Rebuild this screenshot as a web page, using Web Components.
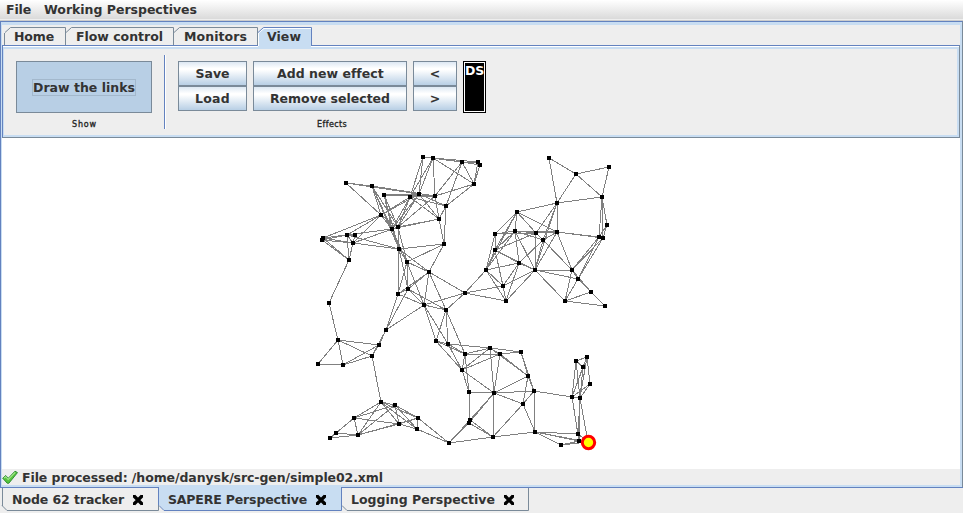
<!DOCTYPE html>
<html lang="en"><head><meta charset="utf-8"><title>Perspectives</title>
<style>
html,body{margin:0;height:513px;overflow:hidden;background:#eee}
body{font:bold 12.5px/16px "DejaVu Sans",sans-serif;color:#333}
</style></head><body>
<app-window></app-window>
<script>
const define = (name, html, setup) => customElements.define(name, class extends HTMLElement {
  constructor() {
    super();
    this.attachShadow({mode: 'open'}).innerHTML = html;
  }
  connectedCallback() { if (setup) setup(this, this.shadowRoot); }
});

/* Text run fitted to a given width by spreading letter spacing. */
define('fit-text', '<style>:host{display:block;white-space:pre;flex:none}span{display:inline-block}</style><span><slot></slot></span>', (el, root) => {
  const s = root.querySelector('span'), w = +el.getAttribute('w'), n = el.textContent.length;
  el.style.width = w + 'px';
  s.style.letterSpacing = (w - s.getBoundingClientRect().width) / n + 'px';
});

define('menu-bar', `<style>:host{display:flex;height:21px;padding:0 6px 1px;gap:13px;align-items:center;box-sizing:border-box;background:linear-gradient(#fff,#dadada 95%,#eee 96%);border-bottom:1px solid #ccc}</style><slot></slot>`);

define('top-tab', `<style>:host{display:grid;height:18px;flex:none}svg,div{grid-area:1/1}div{padding:2px 0 0 9px;line-height:16px}svg{display:block;overflow:visible}</style>
<svg height="18"></svg><div><slot></slot></div>`, (el, root) => {
  const w = +el.getAttribute('w'), on = el.hasAttribute('on'), first = el.hasAttribute('first');
  const svg = root.querySelector('svg');
  svg.setAttribute('width', w);
  el.style.width = w + 'px';
  svg.innerHTML = (on ? `<path d="M0 21V6L5 1H${w-1}V21H0z" fill="#c8ddf2"/><path d="M.5 19V6L6 1.5H${w-1}" fill="none" stroke="#fff"/>` : '') +
    `<path d="M0 5.5L5.5 .5H${w-.5}V18" fill="none" stroke="${on ? '#6382bf' : '#7a8a99'}"/>` +
    (first ? '<path d="M-.5 18V6" stroke="#7a8a99"/>' : '');
});

define('bottom-tab', `<style>:host{display:grid;height:24px;flex:none}svg,div{grid-area:1/1}.c{display:flex;gap:8px;padding:5px 0 0 10px;align-items:flex-start}svg.b{display:block;overflow:visible}.x{margin-top:2px}</style>
<svg class="b" height="24"></svg><div class="c"><slot></slot><svg class="x" width="12" height="12" viewBox="0 0 12 12"><path d="M2 2L10 10M10 2L2 10" stroke="#000" stroke-width="3.3"/><path d="M1 2H3M9 2H11M1 10H3M9 10H11" stroke="#000" stroke-width="2"/></svg></div>`, (el, root) => {
  const w = +el.getAttribute('w'), on = el.hasAttribute('on'), first = el.hasAttribute('first');
  const svg = root.querySelector('svg');
  svg.setAttribute('width', w);
  el.style.width = w + 'px';
  svg.innerHTML = (on ? `<path d="M0 0H${w-1}V23H5L0 18z" fill="#c8ddf2"/>` : '') +
    `<path d="M0 18.5L5 23.5H${w-.5}V1" fill="none" stroke="${on ? '#6382bf' : '#7a8a99'}"/>` +
    (on ? '<path d="M-.5 18V0" stroke="#6382bf"/>' : `<path d="M0 .5H${w}" stroke="#6382bf"/>`) +
    (first ? '<path d="M.5 1V19" stroke="#7a8a99"/>' : '');
});

define('push-button', `<style>:host{display:flex;box-sizing:border-box;height:25px;border:1px solid #7a8a99;align-items:center;justify-content:center;background:linear-gradient(#dde8f3,#fff 28%,#fff 34%,#b8cfe5)}
:host([pressed]){height:52px;background:#b8cfe5}:host([pressed]) div{border:1px solid #a3b8cc;margin:1px 0 0;height:15px;line-height:15px}</style><div><slot></slot></div>`);

define('effect-list', `<style>:host{display:block;box-sizing:border-box;width:23px;height:52px;border:1px solid #000;background:#fff;padding:1px}div{background:#000;color:#fff;height:48px;line-height:16px}</style><div><slot></slot></div>`);

define('status-line', `<style>:host{display:flex;height:16px;background:#eee;gap:4px;line-height:17px}svg{flex:none}</style>
<svg width="16" height="16" viewBox="0 0 16 16"><path d="M.7 9.2L3.7 6.5L6.3 9.2L13 2.2L15.5 3.6L6.8 14.3L5.2 14.2z" fill="#57c43d" stroke="#25842b" stroke-width=".9"/><path d="M2 9L3.7 7.7L6.2 10.5L13.2 3.4" fill="none" stroke="#a5e68d" stroke-width="1.1"/></svg><slot></slot>`);

define('node-map', '<style>:host{display:block;background:#fff;height:331px}svg{display:block}</style><svg width="958" height="331" viewBox="2 138 958 331"></svg>', (el, root) => {
  const groups = {
    a: '423,157 433,158 462,162 478,162 480,165 474,184 346,183 372,186 384,195 410,197 419,194 435,196 446,206 381,215 439,219 392,229 398,227 444,244 399,249 322,240 347,235 355,235 353,243 349,260 407,262 429,272 323,238',
    b: '329,303 338,340 318,364 343,365 379,345 372,356 386,330 398,294 408,289 424,305 446,310 465,293 436,341 448,344 465,354 462,370 490,348',
    c: '549,158 576,174 609,167 602,197 557,203 517,212 495,234 515,231 536,233 543,240 557,232 495,250 519,263 535,270 486,270 503,286 506,301 572,270 578,279 591,292 565,301 605,306 607,225 599,237 603,238',
    d: '381,402 395,405 354,418 418,418 399,424 417,429 358,435 336,433 330,438 449,443',
    e: '500,354 521,352 528,376 534,391 523,404 469,392 494,393 470,420 469,423 493,437 535,432 561,445 578,434 579,441 572,397 580,398 576,361 587,357 583,367 590,384 588,442'
  };
  /* Each entry lists a node followed by the nodes it is linked to. */
  const links = `a0 a1 a2 a9 a10;a1 a2 a3 a5 a9 a10 a11;a2 a3 a4 a5 a11 a12;a3 a4 a5;a4 a5;a5 a11 a12;
a6 a7 a10 a13;a7 a10 a11 a13 a15 a16 a18;a8 a10 a11 a15 a16 a18;a9 a10 a11 a12 a13 a14 a15 a16;
a10 a12 a13 a14 a15 a16;a11 a14 a16;a12 a14 a17;a13 a15 a16 a20 a22 a26;a14 a15 a16;a15 a16 a18 a20 a26 a24;a16 a18 a22 a24;
a14 a17;a17 a18 a24 a25;a18 a22 a20 a24 a25 b7 b8;a19 a20 a22 a23 a26;a26 a20 a22 a23;a20 a21 a22 a23;a21 a22;a22 a23;a23 b0;
a24 a25 b7 b8 b9;a25 b7 b8 b9 b10 b11;b0 b1;b1 b2 b3 b4 b5;b2 b3;b3 b4 b5;b4 b5 b6;b5 b6 d0;b6 b7 b8 b9;b7 b8 b9;b8 b9 b10;b9 b10 b11 b12 b13;b10 b12 b13 b14 b11;b11 c14 c15 c16;
b12 b13 b14 b15;b13 b14 b15 b16;b14 b15 b16 e0 e5;b15 b16 e0 e5 e6;b16 e0 e1 e2 e6;e0 e1 e2 e6;e1 e2 e3;e2 e3 e4 e6;e3 e4 e6 e10 e14;e4 e6 e9 e10;
e5 e6 e7 e8;e6 e7 e8 e9;e7 e8 e9 d9;e8 e9 d9;e9 d9 e10;e10 e11 e12 e13 e20;e11 e13 e20;e12 e13 e14 e15 e20;e13 e14 e15 e20;e14 e15 e16 e17 e18 e19;e15 e16 e17 e18 e19 e20;e16 e17 e18;e17 e18 e19;
c0 c1 c4;c1 c2 c3 c4;c2 c3;c3 c4 c22 c23 c24;c4 c5 c10 c9 c8 c13;c5 c6 c7 c8 c10 c11 c14;c6 c7 c8 c11 c14;c7 c8 c10 c9 c11 c12 c13 c14;c8 c9 c10 c11 c13;
c9 c10 c12 c13 c17;c10 c13 c17 c23 c24;c11 c12 c13 c14 c15;c12 c13 c14 c15 c16;c13 c15 c16 c17 c18 c20;c14 c15 c16;c15 c16;c17 c18 c20 c23 c24 c19;c18 c19 c20 c23 c24;c19 c20 c21;c20 c21;c22 c23 c24;c23 c24;
d0 d1 d2 d3 d4 d5 d6;d1 d2 d3 d4 d5 d6;d2 d4 d6 d7;d3 d4 d5 d6 d9;d4 d5 d6;d5 d9;d6 d7 d8;d7 d8`;
  const at = {};
  for (const g in groups) groups[g].split(' ').forEach((p, i) => at[g + i] = p.split(',').map(Number));
  let lines = '', dots = '';
  links.split(';').forEach(s => {
    const [from, ...to] = s.trim().split(/\s+/);
    to.forEach(t => lines += `M${at[from].join(' ')}L${at[t].join(' ')}`);
  });
  for (const k in at) if (k !== 'e20') dots += `M${at[k][0]-2} ${at[k][1]-2}h4v4h-4z`;
  root.querySelector('svg').innerHTML = `<g shape-rendering="crispEdges"><path d="${lines}" stroke="#808080" fill="none"/><path d="${dots}"/></g><circle cx="588.5" cy="442.5" r="6.2" fill="#ff0" stroke="#f00" stroke-width="3"/>`;
});

define('control-ribbon', `<style>
:host{display:flex;box-sizing:border-box;height:93px;border:1px solid #7a8a99;border-top-color:#6382bf;border-left-color:#6382bf;box-shadow:inset 0 1px #fff,inset 0 3px #c8ddf2,inset -2px -2px #c8ddf2,inset 1px 0 #c8ddf2;padding:9px 0 0 13px}
.group{display:flex;flex-direction:column;align-items:center}
.row{display:flex;gap:6px;height:52px;margin-top:6px}.pair{display:flex;flex-direction:column}
.cap{font:normal 8px/10px "DejaVu Sans",sans-serif;color:#222;margin-top:7px;-webkit-text-stroke:.3px #222}
.sep{width:1px;height:74px;background:#6382bf;border-right:1px solid #fff;margin:0 12px}
</style>
<div class="group"><div class="row"><push-button pressed style="width:136px"><fit-text w="102">Draw the links</fit-text></push-button></div><fit-text class="cap" w="25" style="padding-left:1px">Show</fit-text></div>
<div class="sep"></div>
<div class="group"><div class="row">
<div class="pair" style="width:69px"><push-button><fit-text w="34">Save</fit-text></push-button><push-button><fit-text w="35">Load</fit-text></push-button></div>
<div class="pair" style="width:154px"><push-button><fit-text w="106">Add new effect</fit-text></push-button><push-button><fit-text w="120">Remove selected</fit-text></push-button></div>
<div class="pair" style="width:44px"><push-button>&lt;</push-button><push-button>&gt;</push-button></div>
<effect-list><fit-text w="19">DS</fit-text></effect-list></div><fit-text class="cap" w="30">Effects</fit-text></div>`);

define('perspective-frame', `<style>
:host{display:block;box-sizing:border-box;height:466px;border:solid #6382bf;border-width:1px 0 0 1px;border-right:1px solid #7a8a99;padding:3px 2px 2px 1px;background:linear-gradient(#eee,#eee) padding-box;box-shadow:inset 0 3px #c8ddf2,inset -2px -2px #c8ddf2,inset 1px 0 #c8ddf2}
.tabs{display:flex;padding:2px 0 0 3px;height:18px}
top-tab[on]{position:relative;z-index:1}
</style>
<div class="tabs"><top-tab first w="61"><fit-text w="40">Home</fit-text></top-tab><top-tab w="108"><fit-text w="87" style="margin-left:1px">Flow control</fit-text></top-tab><top-tab w="84"><fit-text w="63" style="margin-left:1px">Monitors</fit-text></top-tab><top-tab on w="54"><fit-text w="34">View</fit-text></top-tab></div>
<control-ribbon></control-ribbon><node-map></node-map>
<status-line><fit-text w="361">File processed: /home/danysk/src-gen/simple02.xml</fit-text></status-line>`);

define('app-window', `<style>
:host{display:block;width:963px;height:513px;overflow:hidden;background:#eee}
.tabs{display:flex;height:26px;padding-left:2px;background:linear-gradient(#6382bf 1px,transparent 1px)}
</style>
<menu-bar><fit-text w="25">File</fit-text><fit-text w="153">Working Perspectives</fit-text></menu-bar>
<perspective-frame></perspective-frame>
<div class="tabs"><bottom-tab first w="157"><fit-text w="112">Node 62 tracker</fit-text></bottom-tab><bottom-tab on w="183"><fit-text w="139" style="margin-left:-1px">SAPERE Perspective</fit-text></bottom-tab><bottom-tab w="187"><fit-text w="144" style="margin-left:-1px">Logging Perspective</fit-text></bottom-tab></div>`);
</script></body></html>
